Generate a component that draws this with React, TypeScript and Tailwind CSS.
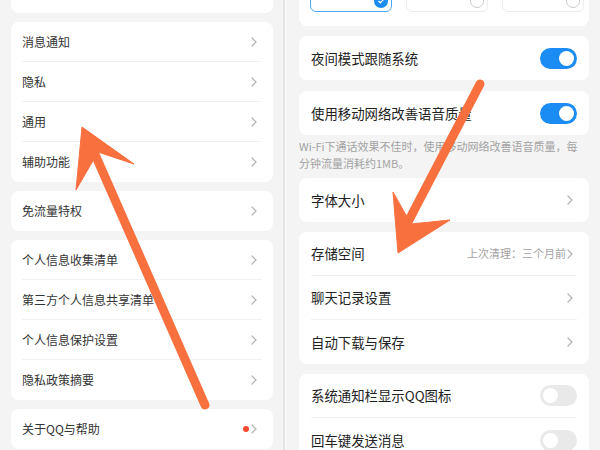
import React from "react";

const font = { fontFamily: '"Noto Sans CJK SC", "Noto Sans", sans-serif' };

const Chevron = () => (
  <svg width="6" height="10" viewBox="0 0 6 10">
    <path d="M1 1l4 4-4 4" fill="none" stroke="#b4b4b4" strokeWidth="1.2" strokeLinecap="round" strokeLinejoin="round" />
  </svg>
);

const Toggle = ({ on }: { on: boolean }) => (
  <div
    className={`w-[37px] h-[21px] rounded-full flex items-center px-[3px] ${
      on ? "bg-[#1a8cf3] justify-end" : "bg-[#e9e9ea] justify-start"
    }`}
  >
    <div className="w-[15px] h-[15px] rounded-full bg-white" />
  </div>
);

function LeftCard({ items, dot }: { items: string[]; dot?: boolean }) {
  return (
    <div className="shrink-0 bg-white rounded-lg">
      {items.map((label, i) => {
        const last = i === items.length - 1;
        return (
          <div key={label} className={last ? "mx-[11px]" : "mx-[11px] border-b border-[#f1f1f1]"}>
            <div className={`${last ? "h-[40px]" : "h-[39px]"} flex items-center justify-between`}>
              <span className="text-[12px] text-[#333]">{label}</span>
              <div className="flex items-center gap-[2px] mr-[5px]">
                {dot && <span className="w-[6px] h-[6px] rounded-full bg-[#f74a2e]" />}
                <Chevron />
              </div>
            </div>
          </div>
        );
      })}
    </div>
  );
}

type RightItem = { label: string; toggle?: boolean; on?: boolean; note?: string };

function RightCard({ items }: { items: RightItem[] }) {
  return (
    <div className="bg-white rounded-lg">
      {items.map((it, i) => {
        const last = i === items.length - 1;
        return (
          <div key={it.label} className={last ? "mx-[12px]" : "mx-[12px] border-b border-[#f1f1f1]"}>
            <div className={`${last ? "h-[44px]" : "h-[43px]"} flex items-center justify-between`}>
              <span className="text-[13.4px] text-[#222]">{it.label}</span>
              {it.toggle ? (
                <Toggle on={!!it.on} />
              ) : (
                <div className="flex items-center gap-[1px] mr-[4px]">
                  {it.note && <span className="text-[11px] text-[#a3a3a3]">{it.note}</span>}
                  <Chevron />
                </div>
              )}
            </div>
          </div>
        );
      })}
    </div>
  );
}

function ThemeOption({ active }: { active?: boolean }) {
  return (
    <div
      className={`w-[82px] shrink-0 h-[40px] -mt-[28px] rounded-md border flex justify-end ${
        active ? "border-[#4aa9f2]" : "border-[#ececf0]"
      }`}
    >
      {active ? (
        <div className="w-[14px] h-[14px] rounded-full bg-[#1a8cf3] mt-[21px] mr-[3px] flex items-center justify-center">
          <svg width="8" height="8" viewBox="0 0 8 8">
            <path d="M1.5 4l1.8 1.8L6.5 2.5" fill="none" stroke="white" strokeWidth="1.3" />
          </svg>
        </div>
      ) : (
        <div className="w-[14px] h-[14px] rounded-full border border-[#c8c8cc] mt-[21px] mr-[3px]" />
      )}
    </div>
  );
}

export default function App() {
  return (
    <div className="relative w-[600px] h-[450px] overflow-hidden flex bg-[#f4f4f4]" style={font}>
      {/* left screen: settings list */}
      <div className="w-[283px] shrink-0 flex flex-col gap-[9px] pl-[11px] pr-[10px]">
        <div className="shrink-0 h-[13px] bg-white rounded-b-lg" />
        <LeftCard items={["消息通知", "隐私", "通用", "辅助功能"]} />
        <LeftCard items={["免流量特权"]} />
        <LeftCard items={["个人信息收集清单", "第三方个人信息共享清单", "个人信息保护设置", "隐私政策摘要"]} />
        <LeftCard items={["关于QQ与帮助"]} dot />
      </div>

      {/* split line */}
      <div className="w-[2px] shrink-0 bg-[#e3e3e3]" />
      <div className="w-[1px] shrink-0 bg-[#fbfbfb]" />

      {/* right screen: general settings */}
      <div className="flex-1 min-w-0 flex flex-col pl-[13px] pr-[11px]">
        <div className="shrink-0 h-[26px] bg-white rounded-b-lg flex gap-[14px] pl-[11px] pr-[4px] overflow-hidden">
          <ThemeOption active />
          <ThemeOption />
          <ThemeOption />
        </div>
        <div className="shrink-0 mt-[10px]">
          <RightCard items={[{ label: "夜间模式跟随系统", toggle: true, on: true }]} />
        </div>
        <div className="shrink-0 mt-[11px]">
          <RightCard items={[{ label: "使用移动网络改善语音质量", toggle: true, on: true }]} />
        </div>
        <div className="shrink-0 pt-[3px] pb-[6px] text-[11px] leading-[17px] text-[#a3a3a3]">
          <div className="whitespace-nowrap">Wi-Fi下通话效果不佳时，使用移动网络改善语音质量，每</div>
          <div className="whitespace-nowrap">分钟流量消耗约1MB。</div>
        </div>
        <div className="shrink-0">
          <RightCard items={[{ label: "字体大小" }]} />
        </div>
        <div className="shrink-0 mt-[10px]">
          <RightCard
            items={[
              { label: "存储空间", note: "上次清理：三个月前" },
              { label: "聊天记录设置" },
              { label: "自动下载与保存" },
            ]}
          />
        </div>
        <div className="shrink-0 mt-[10px]">
          <RightCard
            items={[
              { label: "系统通知栏显示QQ图标", toggle: true },
              { label: "回车键发送消息", toggle: true },
            ]}
          />
        </div>
      </div>

      {/* annotation arrows */}
      <svg className="absolute inset-0 pointer-events-none" width="600" height="450" viewBox="0 0 600 450">
        <g fill="#f9703f" stroke="#f9703f">
          <line x1="205" y1="405" x2="94" y2="152" strokeWidth="9" strokeLinecap="round" />
          <polygon points="82,127 134,164 98,152 76,190" strokeWidth="1" strokeLinejoin="round" />
          <line x1="480" y1="84" x2="408" y2="222" strokeWidth="9" strokeLinecap="round" />
          <polygon points="398,253 450,220 411,224 393,192" strokeWidth="1" strokeLinejoin="round" />
        </g>
      </svg>
    </div>
  );
}
